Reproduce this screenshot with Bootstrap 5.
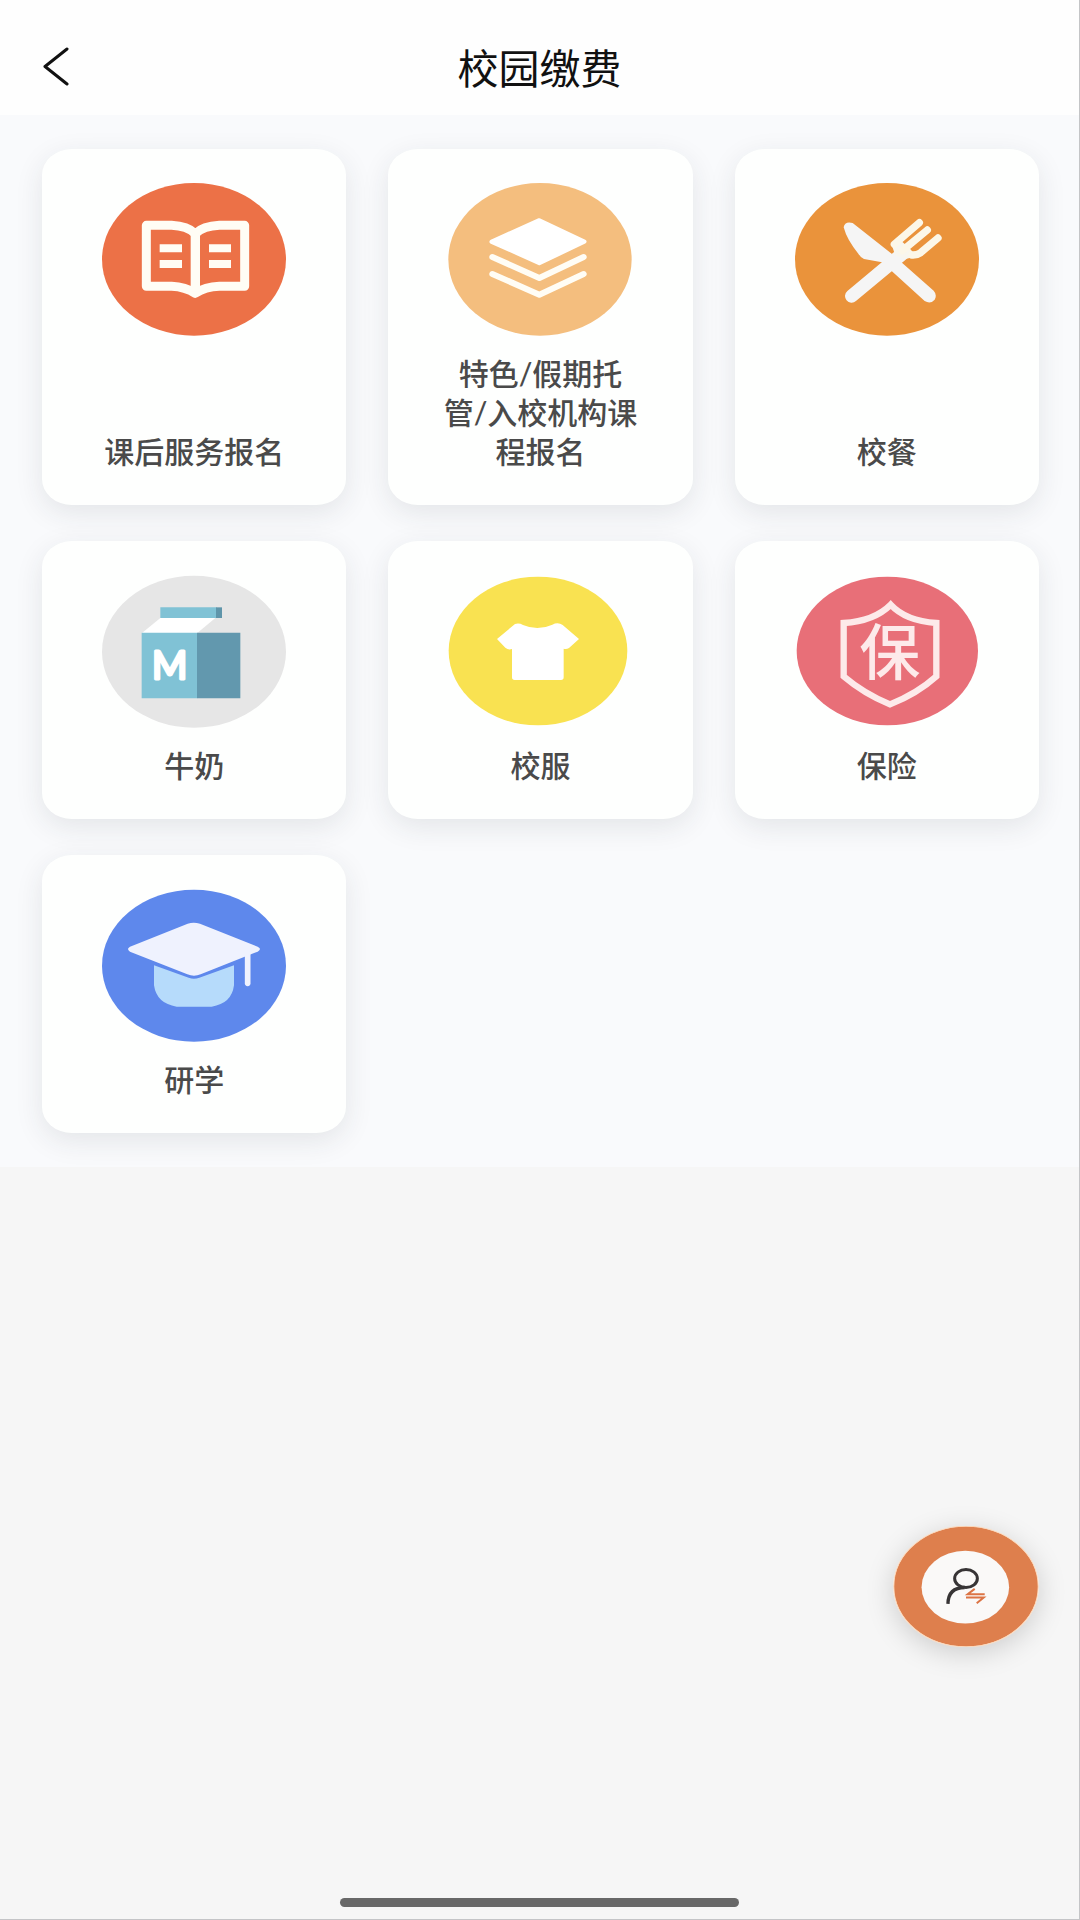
<!DOCTYPE html>
<html lang="zh-CN">
<head>
<meta charset="utf-8">
<meta name="viewport" content="width=device-width, initial-scale=1">
<title>校园缴费</title>
<link href="https://cdn.jsdelivr.net/npm/bootstrap@5.3.0/dist/css/bootstrap.min.css" rel="stylesheet">
<style>
  body { font-family: "Noto Sans CJK SC", sans-serif; background: #f6f6f6; }
  .page { border-right: 1px solid #c4c5c7; border-bottom: 1px solid #c4c5c7; }
  .topbar { height: 115px; padding: 17px 42px 0; background: #fefefe; }
  .topbar h1 { font-size: 41px; line-height: 54px; font-weight: 400; color: #111; }
  .side { width: 28px; }
  .side svg, .tile svg { display: block; }
  .services { background: #f9fafc; padding: 34px 40px 34px 42px; }
  .services .row { --bs-gutter-x: 42px; --bs-gutter-y: 36px; margin-top: -36px; }
  .tile { border-radius: 30px / 26px; background: #fefffe; padding: 34px 42px; box-shadow: 0 8px 28px rgba(40, 50, 60, .1); }
  .tile svg { width: 184px; height: 153px; }
  .tile-label { font-family: Lato, "Noto Sans CJK SC", sans-serif; font-size: 30px; line-height: 39px; font-weight: 500; color: #4a4a4a; padding-top: 18px; }
  .switcher { right: 41px; bottom: 273px; width: 146px; height: 121px; border-radius: 50%; box-shadow: 0 6px 28px rgba(0, 0, 0, .17); }
  .home-bar { width: 37%; height: 9px; margin-bottom: 12px; background: #686868; }
</style>
</head>
<body>
<div class="page d-flex flex-column min-vh-100">
  <header class="topbar d-flex align-items-center justify-content-between">
    <button type="button" class="side btn p-0 border-0" aria-label="返回">
      <svg width="28" height="40" viewBox="0 0 28 40" fill="none" stroke="#111" stroke-width="3" stroke-linecap="round" stroke-linejoin="round"><path d="M25 3 3 20.500 25 38"/></svg>
    </button>
    <h1 class="m-0">校园缴费</h1>
    <span class="side"></span>
  </header>

  <main class="services">
    <div class="row row-cols-3">
      <div class="col">
        <a href="#" class="tile h-100 d-flex flex-column align-items-center text-decoration-none">
          <svg viewBox="216 129 552 459" aria-hidden="true">
            <ellipse cx="492" cy="358" rx="276" ry="229" fill="#ec7147"/>
            <path d="M349 256H425Q472 258 496 281 520 258 568 256H644V439H568Q525 441 496 460 466 441 425 439H349Z" fill="none" stroke="#fffdf5" stroke-width="27" stroke-linejoin="round"/>
            <path d="M496 280V455" stroke="#fffdf5" stroke-width="28"/>
            <path d="M389 325H456M389 372H456M537 325H603M537 372H603" stroke="#fffdf5" stroke-width="24"/>
          </svg>
          <span class="tile-label text-center mt-auto">课后服务报名</span>
        </a>
      </div>
      <div class="col">
        <a href="#" class="tile h-100 d-flex flex-column align-items-center text-decoration-none">
          <svg viewBox="205 129 552 459" aria-hidden="true">
            <ellipse cx="481" cy="358" rx="275" ry="229" fill="#f4be7e"/>
            <path d="M479 241 614 305 479 369 336 305Z" fill="#fff" stroke="#fff" stroke-width="13" stroke-linejoin="round"/>
            <path d="M338 351 479 414 612 351M338 402 479 464 612 402" fill="none" stroke="#fffdf5" stroke-width="18" stroke-linecap="round" stroke-linejoin="round"/>
          </svg>
          <span class="tile-label text-center mt-auto">特色/假期托<br>管/入校机构课<br>程报名</span>
        </a>
      </div>
      <div class="col">
        <a href="#" class="tile h-100 d-flex flex-column align-items-center text-decoration-none">
          <svg viewBox="210 129 552 459" aria-hidden="true">
            <ellipse cx="486" cy="358" rx="276" ry="229" fill="#ea933b"/>
            <path d="M356 262Q359 243 383 249L502 343 626 452Q637 464 629 479 617 493 599 483L471 367 417 357Q407 353 400 341 366 300 356 262Z" fill="#f5f5f5"/>
            <path d="M380 468 530 343" stroke="#f5f5f5" stroke-width="40" stroke-linecap="round"/>
            <path d="M508 316 516 340 540 350 562 345 549 330 526 310Z" fill="#f8f6ee" stroke="#f8f6ee" stroke-width="14" stroke-linejoin="round"/>
            <path d="M508 313 583 248M532 332 607 270M561 345Q576 346 587 338L639 294" fill="none" stroke="#fcf7e8" stroke-width="22" stroke-linecap="round"/>
          </svg>
          <span class="tile-label text-center mt-auto">校餐</span>
        </a>
      </div>
      <div class="col">
        <a href="#" class="tile h-100 d-flex flex-column align-items-center text-decoration-none">
          <svg viewBox="216 133 552 459" aria-hidden="true">
            <ellipse cx="492" cy="363" rx="276" ry="228" fill="#e6e6e6"/>
            <path d="M391 230H560V262H391Z" fill="#80c2d5"/><path d="M558 230H576V262H558Z" fill="#5f95aa"/>
            <path d="M391 262H556L502 307H336Z" fill="#fff"/>
            <path d="M335 306H502V503H335Z" fill="#80c2d5"/><path d="M501 306H631V503H501Z" fill="#6298ae"/>
            <text x="419" y="446" text-anchor="middle" font-family="Lato, sans-serif" font-size="114" font-weight="400" fill="#fff" stroke="#fff" stroke-width="9" stroke-linejoin="round">M</text>
          </svg>
          <span class="tile-label text-center mt-auto">牛奶</span>
        </a>
      </div>
      <div class="col">
        <a href="#" class="tile h-100 d-flex flex-column align-items-center text-decoration-none">
          <svg viewBox="205 133 552 459" aria-hidden="true">
            <ellipse cx="475" cy="361" rx="268" ry="223" fill="#f9e251"/>
            <path d="M406 280Q418 276 430 283 474 302 518 282 535 273 549 283L598 325 568 352Q560 357 552 354V440Q552 448 544 448H405Q397 448 397 440V355Q386 359 377 351L352 325Z" fill="#fff"/>
          </svg>
          <span class="tile-label text-center mt-auto">校服</span>
        </a>
      </div>
      <div class="col">
        <a href="#" class="tile h-100 d-flex flex-column align-items-center text-decoration-none">
          <svg viewBox="210 133 552 459" aria-hidden="true">
            <ellipse cx="487" cy="361" rx="272" ry="223" fill="#e86f78"/>
            <path d="M497 222Q542 271 634 277V437Q576 489 495 521 417 489 356 437V277Q448 271 497 222Z" fill="none" stroke="#fdeaea" stroke-width="19"/>
            <text x="494" y="434" text-anchor="middle" font-size="183" font-weight="500" fill="#fdeaea">保</text>
          </svg>
          <span class="tile-label text-center mt-auto">保险</span>
        </a>
      </div>
      <div class="col">
        <a href="#" class="tile h-100 d-flex flex-column align-items-center text-decoration-none">
          <svg viewBox="216 141 552 459" aria-hidden="true">
            <ellipse cx="492" cy="371" rx="276" ry="228" fill="#5e88ec"/>
            <path d="M372 370 476 407Q492 413 508 407L612 370V430Q605 485 545 494H440Q380 485 372 430Z" fill="#b6dbfb"/>
            <path d="M473 245Q491 239 510 245L683 314Q697 321 683 329L512 397Q492 405 472 397L300 329Q288 321 300 314Z" fill="#eff2fe"/>
            <path d="M653 334V424" stroke="#eff2fe" stroke-width="17" stroke-linecap="round"/>
          </svg>
          <span class="tile-label text-center mt-auto">研学</span>
        </a>
      </div>
    </div>
  </main>

  <div class="home-bar rounded-pill mt-auto align-self-center"></div>
</div>

<button type="button" class="switcher btn p-0 border-0 position-fixed" aria-label="切换用户">
  <svg class="d-block" width="146" height="121" viewBox="70 77 436 362" aria-hidden="true">
    <ellipse cx="288" cy="258" rx="216" ry="180" fill="#de7f4d" stroke="#fbd9bd" stroke-width="3"/>
    <ellipse cx="286" cy="260" rx="131" ry="109" fill="#faf9f8"/>
    <ellipse cx="288" cy="234" rx="34" ry="27" fill="none" stroke="#373435" stroke-width="9"/>
    <path d="M234 310Q235 261 284 261" fill="none" stroke="#373435" stroke-width="10"/>
    <path d="M344 281H293L314 265M288 291H341L320 308" fill="none" stroke="#dc7444" stroke-width="6"/>
  </svg>
</button>
<script src="https://cdn.jsdelivr.net/npm/bootstrap@5.3.0/dist/js/bootstrap.bundle.min.js"></script>
</body>
</html>
